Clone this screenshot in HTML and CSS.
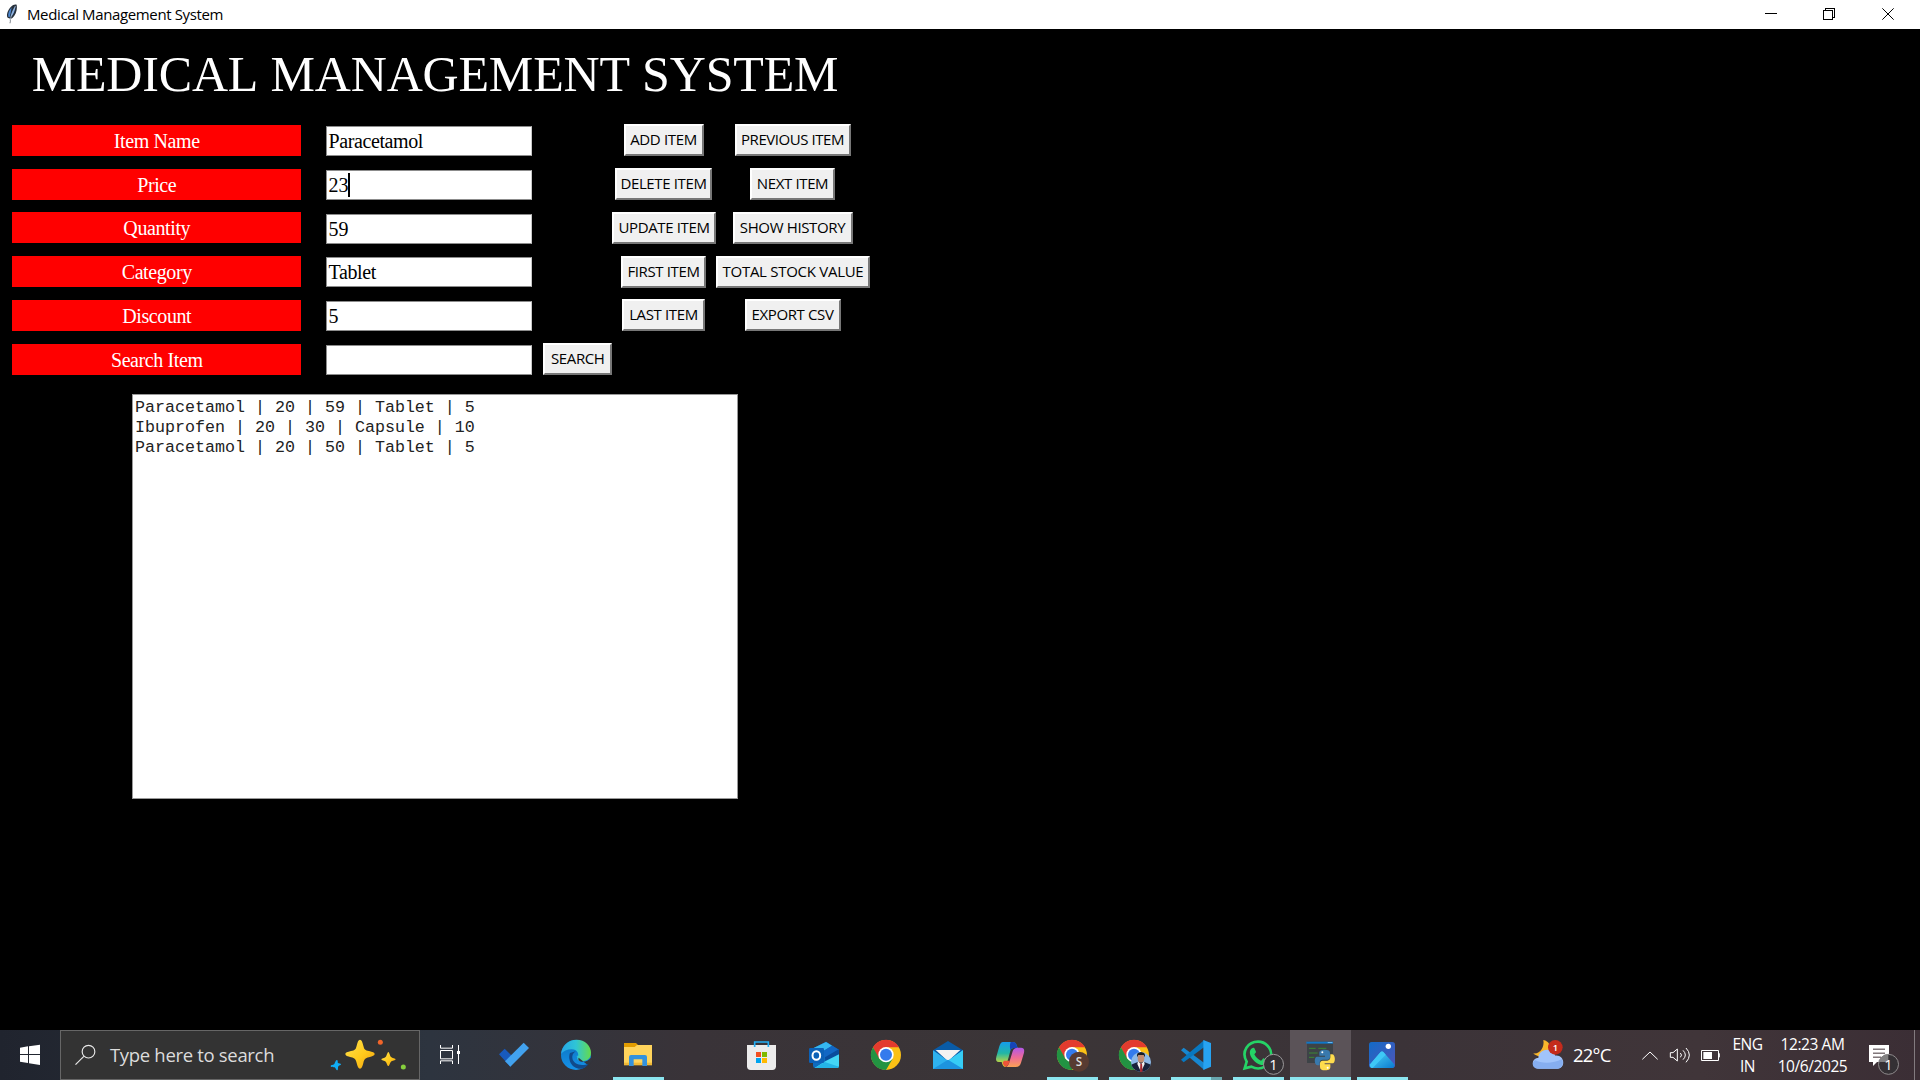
FILE: index.html
```html
<!DOCTYPE html>
<html lang="en">
<head>
<meta charset="utf-8">
<title>Medical Management System</title>
<link rel="stylesheet" href="styles.css">
</head>
<body>
<header class="titlebar">
  <svg class="feather" viewBox="0 0 60 87"><path d="M29 70l2-14-8-3c-5-8 0-23 10-33 6-6 12-8 17-6 2 9 0 24-7 33-4 6-8 9-11 9l-1 14z" fill="#26303c"/><path d="M25 50c-2-9 3-20 10-28-2 12-4 22-6 30z" fill="#4b86cf"/><path d="M31 52c9-7 14-19 16-34-8 8-13 20-16 34z" fill="#6f9fdf"/><path d="M29 62L46 18" stroke="#b8c7d6" stroke-width="2"/></svg>
  <span class="window-title">Medical Management System</span>
  <svg class="controls" viewBox="0 0 600 87" shape-rendering="crispEdges" fill="none" stroke="#000" stroke-width="3"><path d="M135 40.500h36M316.500 30v-4.500h27v27H339M310.500 31.500h27v27h-27z"/><path d="M487 25l34 34M521 25l-34 34" shape-rendering="auto"/></svg>
</header>
<main class="app">
  <h1 class="heading">MEDICAL MANAGEMENT SYSTEM</h1>
  <div class="form">
    <label class="label">Item Name</label><div class="entry">Paracetamol</div><span></span><button class="btn w-add">ADD ITEM</button><button class="btn w-prev">PREVIOUS ITEM</button>
    <label class="label">Price</label><div class="entry num">23<i class="caret"></i></div><span></span><button class="btn w-delete">DELETE ITEM</button><button class="btn w-next">NEXT ITEM</button>
    <label class="label">Quantity</label><div class="entry num">59</div><span></span><button class="btn w-update">UPDATE ITEM</button><button class="btn w-show">SHOW HISTORY</button>
    <label class="label">Category</label><div class="entry">Tablet</div><span></span><button class="btn w-first">FIRST ITEM</button><button class="btn w-total">TOTAL STOCK VALUE</button>
    <label class="label">Discount</label><div class="entry num">5</div><span></span><button class="btn w-last">LAST ITEM</button><button class="btn w-export">EXPORT CSV</button>
    <label class="label">Search Item</label><div class="entry"></div><button class="btn w-search">SEARCH</button>
  </div>
  <pre class="output">Paracetamol | 20 | 59 | Tablet | 5
Ibuprofen | 20 | 30 | Capsule | 10
Paracetamol | 20 | 50 | Tablet | 5</pre>
</main>
<footer class="taskbar">
  <svg class="start" viewBox="0 30 180 150"><path fill="#fff" d="M60 83l24-4v23H60zM87 78.500L120 74v28H87zM60 105h24v24l-24-4zM87 105h33v30l-33-5z"/></svg>
  <div class="search">
    <svg class="lens" viewBox="183 33 140 144" fill="none" stroke="#e8e8e8" stroke-width="3.500"><circle cx="265" cy="95" r="19"/><path d="M251 109l-25 25"/></svg>
    <span class="search-text">Type here to search</span>
    <svg class="sparkles" viewBox="973 33 285 144"><defs><linearGradient id="gold" x1="0" y1="0" x2="1" y2="1"><stop offset="0" stop-color="#ffe14f"/><stop offset=".55" stop-color="#ffca1c"/><stop offset="1" stop-color="#ef9d12"/></linearGradient></defs><path fill="url(#gold)" d="M1081 59c5 0 7 6 10 18 3 12 5 13 17 16 11 3 17 5 17 9s-6 7-17 10c-12 3-14 5-17 17-3 11-5 17-10 17s-7-6-10-17c-3-12-5-14-17-17-11-3-17-5-17-10s6-6 17-9c12-3 14-4 17-16 3-12 5-18 10-18z"/><path fill="url(#gold)" d="M1166 96c3 0 5 13 8 15 3 3 14 4 14 7s-11 4-14 7c-3 3-5 13-8 13s-5-10-8-13c-3-3-13-4-13-7s10-4 13-7c3-2 5-15 8-15z"/><path fill="#10aef5" d="M1012 120c4 1 1 8 3 9 2 2 9 1 9 4s-7 4-8 6c-2 3 0 11-3 12s-5-7-8-9c-3-1-12 0-12-4 0-3 8-3 10-5 3-3 5-14 9-13z"/><circle cx="1142" cy="67" r="7.500" fill="#f2652a"/><circle cx="1211" cy="141" r="7.500" fill="#86cf3d"/></svg>
  </div>
  <nav class="tasks">
    <div class="task"><svg viewBox="6 30 186 150" fill="none" stroke="#fff" stroke-width="3"><path d="M61.500 75v9.500h36V75M61.500 91.500h36v25h-36zM61.500 132v-9.500h36v9.500M115.500 75v57"/><path d="M111 93h9v9h-9z" fill="#fff" stroke="none"/></svg></div>
    <div class="task"><svg viewBox="192 30 186 150"><path d="M237 103l17-17 31 31-14 23z" fill="#185abd"/><path d="M255 124l56-56 16 16-56 56z" fill="#42a2ee"/></svg></div>
    <div class="task"><svg viewBox="378 30 186 150"><defs><linearGradient id="e1"><stop stop-color="#26a6e8"/><stop offset=".5" stop-color="#2fc5d6"/><stop offset="1" stop-color="#65db4b"/></linearGradient><linearGradient id="e2" x2="0" y2="1"><stop stop-color="#0c71bc"/><stop offset="1" stop-color="#1592ea"/></linearGradient></defs><circle cx="468" cy="105" r="45" fill="url(#e2)"/><path d="M423 102c3-26 22-43 46-43 27 0 44 19 44 39 0 18-14 26-27 25-11 0-17-5-13-11 5-8 0-24-18-24-14 0-25 5-32 14z" fill="url(#e1)"/><path d="M476 113c-3 6 2 12 13 12 10 0 17-4 23-11l6 8-14 14z" fill="#33353d"/><path d="M450 99c-8 17 4 51 37 47 8-3 14-8 19-15-19 8-46 4-49-17-1-7 2-15 10-20z" fill="#114a8b"/><path d="M474 114c-3-2-5-4-3-8 3 4 3 5 3 8z" fill="#2fc5d6"/></svg></div>
    <div class="task open"><svg viewBox="564 30 186 150"><path d="M612 69h36l6 6-5 10h-37z" fill="#e29c00"/><path d="M612 81h32l7-6h45v60h-84z" fill="#ffd45c"/><path d="M612 128h84v8h-84z" fill="#f1b936"/><path d="M633 105h42q6 0 6 6v27h-14v-20h-26v20h-14v-27q0-6 6-6z" fill="#3492dd"/></svg></div>
    <div class="task"></div>
    <div class="task"><svg viewBox="6 30 186 150"><path d="M51 75h87v64q0 11-11 11H62q-11 0-11-11z" fill="#ececec"/><path d="M74 81V66h41v15" fill="none" stroke="#25aef3" stroke-width="5"/><path fill="#f25022" d="M78 96h15v15H78z"/><path fill="#7fba00" d="M96 96h15v15H96z"/><path fill="#00a4ef" d="M78 114h15v15H78z"/><path fill="#ffb900" d="M96 114h15v15H96z"/></svg></div>
    <div class="task"><svg viewBox="192 30 186 150"><path d="M249 85l39-20 39 24v48q0 7-7 7h-64q-7 0-7-7z" fill="#0f6bbd"/><path d="M251 84l37-18 18 11-36 23z" fill="#35b8f1"/><path d="M270 99l36-22 21 13-42 25z" fill="#1267c4"/><path d="M285 112l42-25v18l-40 24z" fill="#0a4c9c"/><path d="M254 144l33-21 40-20v34q0 7-7 7z" fill="#43d5f5"/><path d="M254 144l30-18 43 14q-2 4-7 4z" fill="#24b4e6"/><rect x="237" y="84" width="45" height="45" rx="4" fill="#0c61b7"/><ellipse cx="259" cy="106.500" rx="11.500" ry="13" fill="none" stroke="#fff" stroke-width="6"/></svg></div>
    <div class="task"><svg viewBox="378 30 186 150"><g id="chrome"><circle cx="468" cy="105" r="45" fill="#fbc116"/><path d="M429 82a45 45 0 0 1 78 0h-39l-23 35z" fill="#e33b2e"/><path d="M429 82a45 45 0 0 0 39 68l20-34-40 0z" fill="#229342"/><circle cx="468" cy="104" r="23" fill="#fff"/><circle cx="468" cy="104" r="18" fill="#347bed"/></g></svg></div>
    <div class="task"><svg viewBox="564 30 186 150"><path d="M609 91l45-28 45 28v30h-90z" fill="#095ba7"/><path d="M617 90h74l-37 34z" fill="#f4f3f2"/><path d="M609 91l45 31 45-31v56h-90z" fill="#2eb2ef"/><path d="M654 122l45-31v56z" fill="#36cdf5"/><path d="M609 147h90l-45-28z" fill="#1d94df"/></svg></div>
    <div class="task"><svg viewBox="750 30 186 150"><defs><linearGradient id="c1" x2="0" y2="1"><stop stop-color="#149cec"/><stop offset=".45" stop-color="#22b6a5"/><stop offset=".8" stop-color="#b6d447"/><stop offset="1" stop-color="#f3c928"/></linearGradient><linearGradient id="c2" x2="0" y2="1"><stop stop-color="#b057ea"/><stop offset=".5" stop-color="#ee6a98"/><stop offset="1" stop-color="#fba254"/></linearGradient></defs><path d="M819 66h28q10 0 13 10l3 8h-13q-7 0-9 8l-5 20-9 29q-9 0-12-15h-8q-12 0-8-16l9-31q4-13 11-13z" fill="url(#c1)"/><path d="M842 66h6q9 0 12 10l3 8h-13q-6 0-8 7-5-11 0-25z" fill="#1644b8"/><path d="M863 83h10q12 0 9 15l-9 30q-4 13-15 13h-31q7-1 10-11l11-36q3-11 15-11z" fill="url(#c2)"/><path d="M822 122h18l-4 10q-3 8-10 8-6-2-8-12z" fill="#ee5438"/></svg></div>
    <div class="task open"><svg viewBox="6 30 186 150"><use href="#chrome" x="-372"/><circle cx="117" cy="125" r="30" fill="#583b31"/><text x="117" y="137" class="avatar-letter">S</text></svg></div>
    <div class="task open"><svg viewBox="192 30 186 150"><use href="#chrome" x="-186"/><defs><clipPath id="face"><circle cx="303" cy="126" r="30"/></clipPath></defs><g clip-path="url(#face)"><path d="M273 96h60v60h-60z" fill="#8cb9e8"/><path d="M273 156v-22l22-9h16l22 9v22z" fill="#18233c"/><path d="M294 124l9 8 9-8 2 8-11 24-11-24z" fill="#f3f1ef"/><path d="M301 131h5l2 25h-8z" fill="#a52932"/><ellipse cx="303" cy="114" rx="10" ry="14" fill="#c28c71"/><path d="M291 112q-2-16 12-16t12 16l-4-7h-16z" fill="#191d24"/></g></svg></div>
    <div class="task open"><svg viewBox="378 30 186 150"><path d="M423 91l8-8 62 46v21z" fill="#1787d0"/><path d="M423 119l8 8 62-46V60z" fill="#0878c0"/><path d="M490 60l23 9v71l-23 10z" fill="#27a3f1"/></svg><b class="stack"></b></div>
    <div class="task open"><svg viewBox="564 30 186 150"><path d="M614 145l6-20c-18-31 5-60 34-60 23 0 40 19 40 40 0 31-32 50-60 35z" fill="none" stroke="#25d366" stroke-width="8"/><path d="M638 84c3-1 5 0 6 2l4 9c0 4-5 6-5 8 4 9 11 15 20 19 3 0 5-7 8-7l11 6c3 3-2 11-7 13-13 5-33-7-42-24-6-12-4-22 5-26z" fill="#25d366"/><circle cx="700.500" cy="133" r="30" fill="#343034" stroke="#9b989a" stroke-width="3"/><text x="700" y="149" class="badge-one">1</text></svg></div>
    <div class="task open active"><svg viewBox="750 30 186 150"><path d="M801 65h78v64h-78z" fill="#3d4347"/><path d="M799 65h80v6h-80z" fill="#1077c8"/><path d="M863 66h14v3h-14z" fill="#68b7f1"/><path d="M807 85h20m8 0h24M807 99h26M807 112h16" stroke="#3c8934" stroke-width="3"/><path d="M854 89c-13 0-16 4-16 10v8h17v3h-24c-9 0-9 24 1 26h7v-8c0-6 4-9 9-9h14c5 0 8-3 8-8V99c0-7-5-10-16-10z" fill="#3979ad"/><path d="M855 151c13 0 16-4 16-10v-8h-17v-3h24c9 0 9-25-1-27h-6v9c0 6-4 10-9 10h-14c-5 0-8 4-8 8v11c0 7 5 10 15 10z" fill="#ffdc4d"/><circle cx="847" cy="97" r="3" fill="#fff"/><circle cx="863" cy="143" r="3" fill="#fff"/></svg></div>
    <div class="task open"><svg viewBox="936 30 186 150"><defs><linearGradient id="p1" x2="1" y2="1"><stop stop-color="#126bc7"/><stop offset="1" stop-color="#5054b8"/></linearGradient><linearGradient id="p2" x2="1" y2="1"><stop stop-color="#51dcfb"/><stop offset="1" stop-color="#0a79cf"/></linearGradient></defs><rect x="987" y="66" width="78" height="78" rx="8" fill="url(#p1)"/><path d="M989 134l31-36q6-7 12 0l32 36q-1 10-9 10h-60q-5-2-6-10z" fill="url(#p2)"/><path d="M989 134l31-36q6-7 12 0l5 6-39 40q-7 0-9-10z" fill="#3ec8f6"/><circle cx="1045" cy="79" r="8" fill="#fff"/></svg></div>
  </nav>
  <div class="tray">
    <svg class="weather" viewBox="60 30 120 150"><path d="M100 60c17 2 24 20 17 32-8 18-36 22-47 8 20 3 34-18 30-40z" fill="#f8b62c"/><path d="M88 146c-26 0-25-32-3-32 1-28 43-34 51-7 29-3 32 39 7 39z" fill="#a1c4fb"/><path d="M82 146c-16-1-18-20-6-25 17 10 55 10 79-3 7 8 4 28-12 28z" fill="#86aef0"/><circle cx="136" cy="82" r="22" fill="#c42b1c"/><text x="136" y="92" class="weather-count">1</text></svg>
    <span class="temp">22°C</span>
    <svg class="status" viewBox="390 30 255 150" fill="none" stroke="#fff" stroke-width="3"><path d="M397 118l23-22 23 22M481 98h8l13-11v36l-13-11h-8zM511 99q7 6 0 13M519 91q14 14 0 28M528 84q20 21 0 43M574.500 91.500h51v30h-51zM628 100v12"/><path d="M580 96h26v21h-26z" fill="#fff" stroke="none"/></svg>
    <div class="lang"><span>ENG</span><span>IN</span></div>
    <div class="clock"><span>12:23 AM</span><span>10/6/2025</span></div>
    <svg class="notice" viewBox="1050 30 180 150"><path d="M1077 75h60v51h-36l-12 12v-12h-12z" fill="#fff"/><path d="M1089 87.500h36M1089 99.500h36M1089 111.500h24" stroke="#403338" stroke-width="3"/><circle cx="1135.500" cy="133" r="30" fill="#343034" stroke="#8e8a8c" stroke-width="3"/><path d="M1107 126q5-21 28-23v23z" fill="#818081"/><text x="1135" y="149" class="badge-one">1</text><path d="M1213.500 30v150" stroke="#827b7f" stroke-width="3"/></svg>
  </div>
</footer>
</body>
</html>
```
FILE: styles.css
```css
* { box-sizing: border-box; }
body { margin: 0; width: 1920px; height: 1080px; display: flex; flex-direction: column; overflow: hidden; background: #000; font-family: "Open Sans", "Noto Sans", sans-serif; }
svg { display: block; flex: none; }
.titlebar { height: 29px; flex: none; display: flex; align-items: center; background: #fff; color: #000; }
.feather { width: 20px; height: 29px; }
.window-title { padding-left: 7px; font-size: 15px; line-height: 29px; letter-spacing: -.37px; white-space: nowrap; }
.controls { width: 200px; height: 29px; margin-left: auto; }
.app { flex: 1; width: 870px; display: flex; flex-direction: column; }
.heading { margin: 0; height: 89.500px; text-align: center; color: #fff; font: 400 50px/90px "Liberation Serif", serif; letter-spacing: -.18px; font-kerning: none; white-space: nowrap; }
.form { display: grid; grid-template-columns: 313.500px 230px 68.500px 104px 154px; grid-auto-rows: 43.750px; place-items: center; }
.label { width: 289px; height: 31px; background: red; color: #fff; text-align: center; font: 20px/32px "Liberation Serif", serif; letter-spacing: -.4px; }
.entry { width: 206px; height: 30px; margin-top: 1.500px; display: flex; align-items: center; padding-left: 2px; background: #fff; color: #000; border: 1px solid #8c8c8c; border-right-color: #c8c8c8; font: 20px/28px "Liberation Serif", serif; letter-spacing: -.4px; }
.entry.num { letter-spacing: 0; }
.caret { width: 2px; height: 24px; margin-left: -1px; background: #000; }
.btn { height: 32px; margin: 0 1px 0 0; padding: 0 0 2px; border: 2px solid; border-color: #fff #777 #777 #fff; background: #f0f0f0; color: #000; font: 15px/26px "Open Sans", sans-serif; letter-spacing: -.36px; white-space: nowrap; }
.w-add { width: 80px; }
.w-prev { width: 116px; letter-spacing: -.45px; }
.w-delete { width: 97px; }
.w-next { width: 85px; }
.w-update { width: 104px; margin-right: 0; }
.w-show { width: 120px; }
.w-first { width: 85px; }
.w-total { width: 154px; margin-right: 0; letter-spacing: -.28px; }
.w-last { width: 83px; }
.w-export { width: 96px; }
.w-search { width: 69px; margin-right: 0; }
.output { width: 606px; height: 405px; margin: 13px 0 0 132px; padding: 3px 0 0 2px; border: 1px solid #999; background: #fff; color: #222; font: 16.667px/20px "Liberation Mono", monospace; }
.taskbar { height: 50px; flex: none; display: flex; color: #fff; background: linear-gradient(90deg, #20242e 0, #2d343f 430px, #393338 690px, #3b3537 1060px, #3b3338 1400px, #403539 1700px, #3b2e35 1920px); }
.start { width: 60px; height: 50px; }
.search { width: 360px; height: 50px; display: flex; border: 1px solid #666; background: #333; }
.lens { width: 47px; height: 48px; }
.search-text { flex: 1; padding-left: 2px; font-size: 18.500px; line-height: 48px; color: #dcdcdc; white-space: nowrap; letter-spacing: -.32px; }
.sparkles { width: 95px; height: 48px; }
.tasks { display: flex; margin-left: 2px; }
.task { width: 62px; height: 50px; position: relative; }
.task svg { width: 62px; height: 50px; }
.open::after { content: ""; position: absolute; left: 5px; bottom: 0; width: 51px; height: 3px; background: #8be5ef; }
.active { width: 61px; margin-right: 1px; background: #5b5358; }
.active::after { left: 0; width: 61px; }
.stack { position: absolute; right: 0; bottom: 0; width: 11px; height: 3px; background: #68a5ad; }
.open:has(.stack)::after { width: 40px; margin-left: 0; }
.open:has(.stack) .stack { right: 6px; }
.task text, .tray text { text-anchor: middle; fill: #fff; font-family: "Open Sans", sans-serif; }
.task .avatar-letter { font-size: 35px; font-weight: 600; fill: #ddd; }
.task .badge-one, .tray .badge-one { font-size: 44px; }
.tray .weather-count { font-size: 28px; font-weight: 600; }
.tray { margin-left: auto; display: flex; }
.weather { width: 40px; height: 50px; }
.temp { width: 70px; padding-left: 3px; font-size: 18.500px; line-height: 50px; letter-spacing: -.8px; white-space: nowrap; }
.status { width: 85px; height: 50px; }
.lang, .clock { display: flex; flex-direction: column; align-items: center; padding-top: 3px; font-size: 15.500px; line-height: 22px; letter-spacing: -.5px; white-space: nowrap; }
.lang { width: 45px; }
.clock { width: 90px; padding-right: 5px; letter-spacing: -.42px; }
.notice { width: 60px; height: 50px; }
```
